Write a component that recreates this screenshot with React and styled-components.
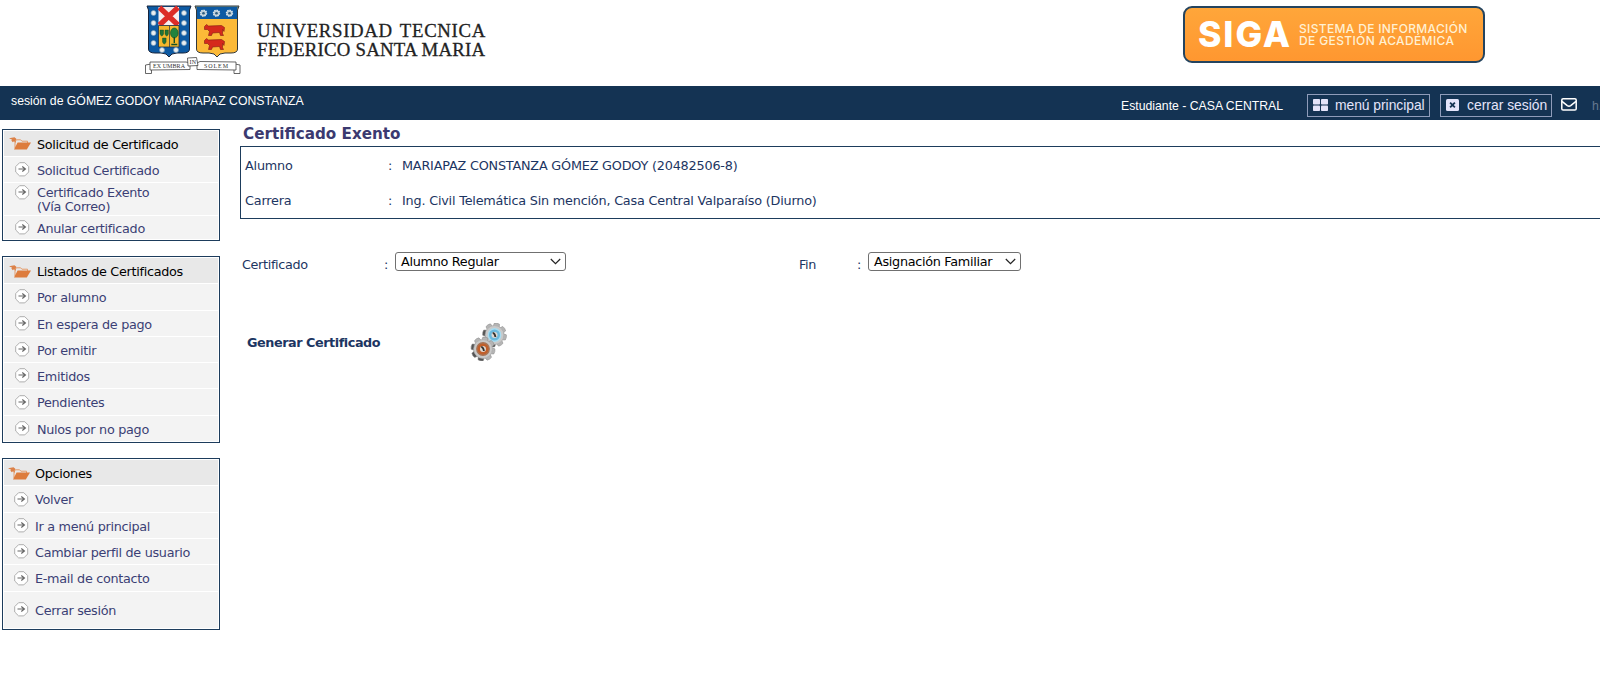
import React from 'react';
import styled, { createGlobalStyle } from 'styled-components';

const GlobalStyle = createGlobalStyle`
  * { box-sizing: border-box; }
  body {
    margin: 0;
    background: #fff;
    overflow: hidden;
    font-family: Verdana, "DejaVu Sans", sans-serif;
    font-size: 12.8px;
    color: #1c3562;
  }
`;

const Page = styled.div`
  width: 1600px;
  height: 691px;
  overflow: hidden;
`;

const Header = styled.header`
  display: flex;
  justify-content: space-between;
  height: 86px;
  padding: 0 115px 0 145px;
`;

const Brand = styled.div`
  display: flex;
  gap: 16px;
  padding-top: 5px;
`;

const BrandName = styled.div`
  padding-top: 16px;
  font-family: "Liberation Serif", serif;
  font-size: 18.8px;
  line-height: 19px;
  color: #222;
  white-space: nowrap;
  -webkit-text-stroke: 0.3px #222;
`;

const Line = styled.div`
  letter-spacing: ${(p) => p.$ls || 0}px;
  word-spacing: ${(p) => p.$ws || 0}px;
`;

const Badge = styled.div`
  display: flex;
  align-items: center;
  width: 302px;
  height: 57px;
  margin-top: 6px;
  padding-left: 13px;
  border: 2px solid #24445f;
  border-radius: 9px;
  background: linear-gradient(#ffa63a, #ff9730);
  color: #fff;
  font-family: Inter, sans-serif;
  white-space: nowrap;
`;

const BadgeName = styled.div`
  width: 101px;
  font-size: 35.5px;
  font-weight: 800;
  letter-spacing: 1.9px;
`;

const BadgeText = styled.div`
  padding-top: 1px;
  font-size: 12px;
  font-weight: 500;
  line-height: 12.5px;
  color: #fff0d2;
`;

const SessionBar = styled.div`
  display: flex;
  justify-content: space-between;
  height: 34px;
  padding-left: 11px;
  background: #143353;
  color: #fff;
  font-family: "Liberation Sans", Arial, sans-serif;
  font-size: 12.25px;
  white-space: nowrap;
`;

const SessionUser = styled.div`
  padding-top: 8px;
  line-height: 14px;
`;

const SessionTools = styled.div`
  display: flex;
  width: 479px;
  padding-top: 8px;
  & > * { flex-shrink: 0; }
`;

const Role = styled.div`
  width: 186px;
  padding-top: 5px;
  line-height: 14px;
`;

const BarButton = styled.button`
  display: flex;
  align-items: center;
  gap: ${(p) => p.$gap}px;
  width: ${(p) => p.$w}px;
  height: 23px;
  margin-right: ${(p) => p.$mr}px;
  padding: 0 0 2px 5px;
  border: 1px solid #8f9cba;
  background: none;
  color: #e4e4fa;
  font-family: "Liberation Sans", Arial, sans-serif;
  font-size: 13.9px;
  white-space: nowrap;
`;

const MailIcon = styled.svg`
  margin: 4px 15px 0 0;
`;

const Faded = styled.span`
  padding-top: 5px;
  color: #66788f;
  line-height: 14px;
`;

const Body = styled.div`
  display: flex;
`;

const Sidebar = styled.aside`
  display: flex;
  flex-direction: column;
  gap: 15px;
  width: 240px;
  padding: 9px 20px 0 2px;
  letter-spacing: -0.3px;
`;

const Panel = styled.nav`
  display: flex;
  flex-direction: column;
  height: ${(p) => p.$h}px;
  padding: 1px;
  border: 1px solid #1d3c5c;
`;

const Row = styled.div`
  display: flex;
  align-items: ${(p) => (p.$two ? 'flex-start' : 'center')};
  flex: ${(p) => p.$flex || 26.3} 1 0;
  padding-left: ${(p) => p.$inset}px;
  padding-top: ${(p) => (p.$two ? 2 : 0)}px;
  border-bottom: 1px solid #fff;
  background: #f3f3f3;
  color: #3b3f75;
  line-height: 14.4px;
  white-space: nowrap;
  &:last-child { border-bottom: 0; }
`;

const HeadRow = styled(Row)`
  background: #e8e8e8;
  color: #000;
`;

const IconCell = styled.span`
  display: flex;
  width: ${(p) => p.$w}px;
  padding-top: ${(p) => p.$drop || 0}px;
`;

const RowText = styled.span`
  padding-top: ${(p) => p.$drop}px;
`;

const Main = styled.main`
  flex: 1;
  padding-top: 4px;
  white-space: nowrap;
`;

const Title = styled.h1`
  margin: 0;
  padding-left: 3px;
  height: 22px;
  font-size: 15.2px;
  line-height: 20px;
  color: #3b3a70;
`;

const InfoBox = styled.section`
  height: 73px;
  padding: 1px 0 0 4px;
  border: 1px solid #1d3c5c;
  border-right: 0;
`;

const InfoRow = styled.div`
  display: grid;
  grid-template-columns: 143px 14px 1fr;
  align-items: center;
  height: 35px;
`;

const FormRow = styled.div`
  display: flex;
  height: 20px;
  margin-top: 33px;
  padding-left: 2px;
`;

const FieldLabel = styled.label`
  width: ${(p) => p.$w}px;
  padding-top: 5px;
  line-height: 16px;
  letter-spacing: -0.35px;
`;

const SelectBox = styled.div`
  display: flex;
  align-items: center;
  justify-content: space-between;
  width: ${(p) => p.$w}px;
  height: 19px;
  margin-right: ${(p) => p.$mr || 0}px;
  padding: 0 4px 0 5px;
  border: 1px solid #707070;
  border-radius: 3px;
  color: #000;
  line-height: 17px;
`;

const Generate = styled.div`
  display: flex;
  align-items: center;
  height: 38px;
  margin-top: 51px;
  padding-left: 7px;
`;

const GenerateLabel = styled.strong`
  width: 223px;
  letter-spacing: -0.45px;
`;

const Label = styled.span`
  letter-spacing: ${(p) => p.$ls || 0}px;
`;

const Folder = () => (
  <svg width="23" height="14" viewBox="0 0 23 14">
    <path d="M0 1.2 5.5 .3 7.3 1.7 6.8 6 5 4.3 3.8 5.2 2.3 3.6 3.2 2.7Z" fill="#dc8148" />
    <path d="M6 11V4.5l1.3-1.7h4.3l1.3 1.4h5.6v2" fill="none" stroke="#e59a68" strokeWidth="1" />
    <path d="M5 12.6 8.6 5.6H22L17.8 12.6Z" fill="#dd7c3d" />
  </svg>
);

const Arrow = () => (
  <svg width="15" height="15" viewBox="0 0 15 15">
    <path d="M4.6.7h5.2l3.9 3.9v5.4l-3.9 3.9H4.6L.7 10V4.6Z" fill="#fff" stroke="#adadad" strokeLinejoin="round" />
    <path d="M3.5 7H9.4M7.3 4.5 10.4 7 7.3 9.5" fill="none" stroke="#666" strokeWidth="1.2" />
  </svg>
);

const Chevron = () => (
  <svg width="11" height="7" viewBox="0 0 11 7">
    <path d="M.8 1 5.5 5.7 10.2 1" fill="none" stroke="#222" strokeWidth="1.2" />
  </svg>
);

const Shield = 'M0 0H44L42.5 4V43Q42.5 47 36 47H30Q24 47 22 51Q20 47 14 47H8Q1.5 47 1.5 43V4Z';

const Cow = ({ y }) => (
  <path
    transform={`translate(58 ${y})`}
    d="M0 2 2 0 4 1.5 17 1 20 3 19.5 7 18 5V9L19 11H16L15 8 8 8.5 7 11H4L5 7 3 5H0Z"
    fill="#d5291c"
    stroke="#801b14"
    strokeWidth=".6"
  />
);

const Crest = () => (
  <svg width="96" height="70" viewBox="0 0 96 70">
    <g transform="translate(2 1)">
      <path d={Shield} fill="#0d5aa3" stroke="#17243c" />
      <path d="M11.5 1H32V19.5H11.5Z" fill="#f7eeee" />
      <path d="m12.5 1.5 18.5 17.5M31 1.5 12.5 19" stroke="#dc2c27" strokeWidth="5.2" />
      <path d="M11.5 19.5h20.5V41H11.5Z" fill="#f4b72c" stroke="#1e3145" strokeWidth=".8" />
      <path d="M22.5 20v21" stroke="#1e3145" strokeWidth=".7" />
      <path d="M13 24h3.6v4q-1.8 4-3.6 0ZM18 24h3.4v4q-1.7 4-3.4 0ZM15.5 32h3.6v4q-1.8 4-3.6 0Z" fill="#217336" stroke="#134326" strokeWidth=".4" />
      <ellipse cx="27.3" cy="27" rx="3.8" ry="5" fill="#22833e" stroke="#145027" strokeWidth=".6" />
      <path d="M27.3 31v6m-3 1.5h6" stroke="#145027" strokeWidth="1.4" />
      {[[6.5, 7], [6.5, 17], [6.5, 27], [6.5, 37], [37, 7], [37, 17], [37, 27], [37, 37], [15, 44], [29, 44]].map(([x, y]) => (
        <circle key={`${x}-${y}`} cx={x} cy={y} r="2.5" fill="#e9eef0" stroke="#7b9bb6" strokeWidth=".7" />
      ))}
    </g>
    <g transform="translate(50 1)">
      <path d={Shield} fill="#fbb938" stroke="#31383c" />
      <path d="M1 .5H43L42 4V13H2V4Z" fill="#0d5aa3" />
      {[8.5, 21.5, 34.5].map((x) => (
        <g key={x} transform={`translate(${x} 7.2)`}>
          <circle r="3" fill="#bacbd6" stroke="#dfe9ee" strokeWidth="1.4" strokeDasharray="1.4 .9" />
          <circle r="1.3" fill="#315f82" />
        </g>
      ))}
    </g>
    <g transform="translate(1.5 0)"><Cow y={19.5} /><Cow y={33.5} /></g>
    <g fill="#fff" stroke="#414141" strokeWidth=".8">
      <path d="M6 59 .5 60v8.5h6V65M90 59l5 1v8.5h-6V65" />
      <path d="M5 57H41l4 1v6.5L5 65ZM52 58l3-1.5 36 .5v8l-39-.5Z" />
      <path d="m42.5 53 9-.5 1.5 8-10 .5Z" />
    </g>
    <g fontFamily="Liberation Serif, serif" fill="#333" fontSize="6">
      <text x="8" y="63.2" textLength="32">EX UMBRA</text>
      <text x="44.5" y="58.8" textLength="6.5">IN</text>
      <text x="59" y="63.2" textLength="24">SOLEM</text>
    </g>
  </svg>
);

const Gear = ({ x, y, color, light }) => (
  <g transform={`translate(${x} ${y})`}>
    {[0, 45, 90, 135, 180, 225, 270, 315].map((a) => (
      <path key={a} transform={`rotate(${a + 12})`} d="M-3.2-8 -2.6-11.6Q0-12.6 2.6-11.6L3.2-8Z" fill={a > 150 && a < 300 ? '#555' : '#b5b5b5'} stroke="#888" strokeWidth=".5" />
    ))}
    <circle r="9.4" fill="#c9c9c9" stroke="#aaa" strokeWidth=".6" />
    <circle r="6.2" fill={color} stroke={light} strokeWidth="1.4" />
    <circle r="3" fill="#ded8d2" />
    <path d="M-1.8-2.2Q.5-2 .9 2" fill="none" stroke="#34302d" strokeWidth="1.8" />
  </g>
);

const Gears = () => (
  <svg width="38" height="38" viewBox="0 0 38 38">
    <Gear x={24.5} y={12} color="#6bb9dd" light="#a8dcf0" />
    <Gear x={13} y={26} color="#c15f2b" light="#a77558" />
  </svg>
);

const panels = [
  {
    title: 'Solicitud de Certificado', h: 112,
    items: [
      { text: 'Solicitud Certificado' },
      { text: 'Certificado Exento', second: '(Vía Correo)', flex: 32 },
      { text: 'Anular certificado', flex: 24.5 },
    ],
  },
  {
    title: 'Listados de Certificados', h: 187,
    items: ['Por alumno', 'En espera de pago', 'Por emitir', 'Emitidos', 'Pendientes', 'Nulos por no pago'].map((text) => ({ text })),
  },
  {
    title: 'Opciones', h: 172, narrow: true,
    items: [
      ...['Volver', 'Ir a menú principal', 'Cambiar perfil de usuario', 'E-mail de contacto'].map((text) => ({ text })),
      { text: 'Cerrar sesión', flex: 37.5 },
    ],
  },
];

const SidePanel = ({ title, h, narrow, items }) => (
  <Panel $h={h}>
    <HeadRow $inset={narrow ? 4 : 5}>
      <IconCell $w={narrow ? 27 : 28} $drop={2}><Folder /></IconCell>
      <RowText $drop={3}>{title}</RowText>
    </HeadRow>
    {items.map((item) => (
      <Row key={item.text} $flex={item.flex} $two={Boolean(item.second)} $inset={narrow ? 10 : 11}>
        <IconCell $w={narrow ? 21 : 22}><Arrow /></IconCell>
        <RowText $drop={item.second ? 1 : 3}>
          {item.text}
          {item.second && <><br />{item.second}</>}
        </RowText>
      </Row>
    ))}
  </Panel>
);

export default function App() {
  return (
    <Page>
      <GlobalStyle />
      <Header>
        <Brand>
          <Crest />
          <BrandName>
            <Line $ls={0.68} $ws={2}>UNIVERSIDAD TECNICA</Line>
            <Line $ls={0.22}>FEDERICO SANTA MARIA</Line>
          </BrandName>
        </Brand>
        <Badge>
          <BadgeName>SIGA</BadgeName>
          <BadgeText>
            <Line $ls={0.33}>SISTEMA DE INFORMACIÓN</Line>
            <Line $ls={0.37}>DE GESTIÓN ACADÉMICA</Line>
          </BadgeText>
        </Badge>
      </Header>
      <SessionBar>
        <SessionUser>sesión de GÓMEZ GODOY MARIAPAZ CONSTANZA</SessionUser>
        <SessionTools>
          <Role>Estudiante - CASA CENTRAL</Role>
          <BarButton $w={123} $mr={10} $gap={7}>
            <svg width="15" height="12" viewBox="0 0 15 12" fill="currentColor">
              <rect width="7" height="5.5" rx=".8" /><rect x="8" width="7" height="5.5" rx=".8" />
              <rect y="6.5" width="7" height="5.5" rx=".8" /><rect x="8" y="6.5" width="7" height="5.5" rx=".8" />
            </svg>
            <Label $ls={-0.05}>menú principal</Label>
          </BarButton>
          <BarButton $w={112} $mr={9} $gap={8}>
            <svg width="13" height="12" viewBox="0 0 13 12">
              <rect width="13" height="12" rx="1.5" fill="currentColor" />
              <path d="m4.1 3.6 4.8 4.8m0-4.8L4.1 8.4" stroke="#143353" strokeWidth="1.8" />
            </svg>
            <Label>cerrar sesión</Label>
          </BarButton>
          <MailIcon width="16" height="13" viewBox="0 0 16 13" fill="none" stroke="#fff" strokeWidth="1.5">
            <rect x=".8" y=".8" width="14.4" height="11.2" rx="1.3" />
            <path d="m1 3.3 5.3 4.3q1.7 1.2 3.4 0L15 3.3" />
          </MailIcon>
          <Faded>h.</Faded>
        </SessionTools>
      </SessionBar>
      <Body>
        <Sidebar>{panels.map((p) => <SidePanel key={p.title} {...p} />)}</Sidebar>
        <Main>
          <Title>Certificado Exento</Title>
          <InfoBox>
            <InfoRow>
              <Label $ls={-0.2}>Alumno</Label><span>:</span>
              <Label $ls={-0.2}>MARIAPAZ CONSTANZA GÓMEZ GODOY (20482506-8)</Label>
            </InfoRow>
            <InfoRow>
              <Label $ls={-0.2}>Carrera</Label><span>:</span>
              <Label $ls={-0.2}>Ing. Civil Telemática Sin mención, Casa Central Valparaíso (Diurno)</Label>
            </InfoRow>
          </InfoBox>
          <FormRow>
            <FieldLabel $w={142}>Certificado</FieldLabel>
            <FieldLabel $w={11}>:</FieldLabel>
            <SelectBox $w={171} $mr={233}><Label $ls={-0.3}>Alumno Regular</Label><Chevron /></SelectBox>
            <FieldLabel $w={58}>Fin</FieldLabel>
            <FieldLabel $w={11}>:</FieldLabel>
            <SelectBox $w={153}><Label $ls={-0.3}>Asignación Familiar</Label><Chevron /></SelectBox>
          </FormRow>
          <Generate>
            <GenerateLabel>Generar Certificado</GenerateLabel>
            <Gears />
          </Generate>
        </Main>
      </Body>
    </Page>
  );
}
